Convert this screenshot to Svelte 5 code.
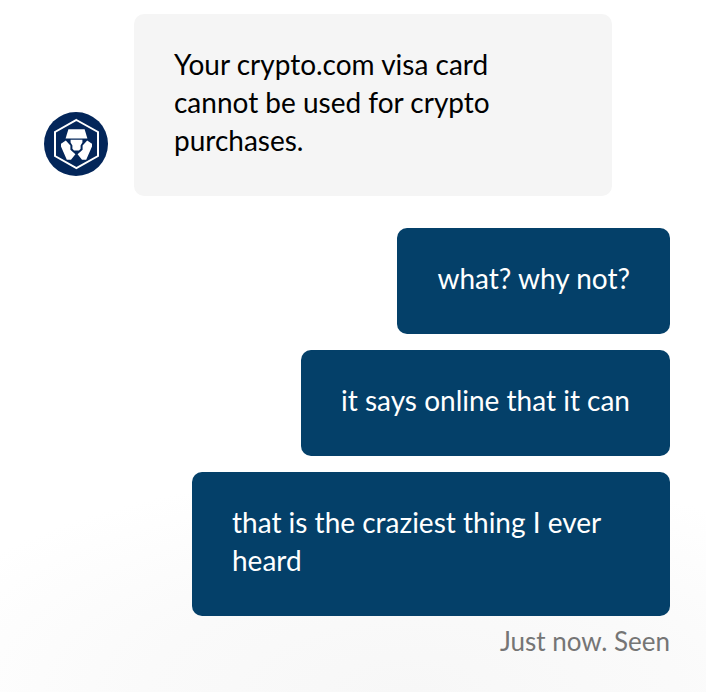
<script lang="ts">
  type Message = { id: number; text: string };

  const reply: Message = {
    id: 1,
    text: 'Your crypto.com visa card cannot be used for crypto purchases.',
  };

  const sent: Message[] = [
    { id: 2, text: 'what? why not?' },
    { id: 3, text: 'it says online that it can' },
    { id: 4, text: 'that is the craziest thing I ever heard' },
  ];

  const status = 'Just now. Seen';
</script>

<main class="conversation">
  <div class="incoming">
    <svg class="avatar" viewBox="0 0 64 64" role="img" aria-label="crypto.com">
      <circle cx="32" cy="32" r="32" fill="#03265a" />
      <path d="M32.4 8 54 20v24L32.4 56 11 44V20Z" fill="none" stroke="#fff" stroke-width="2" />
      <g fill="#fff">
        <path d="M24.4 17.2h16.2l2.8 9.2H21.6Z" />
        <path d="M26.6 27.8h11.8v2.8l-1.8 2.8v3.4l-1.6 1.6h-5l-1.6-1.6v-3.4l-1.8-2.8Z" />
        <path d="m21.8 28.4 4.6 5.2v4.2l5 4.4-4.4 5.6h-4.2L17 34.4v-2.6Z" />
        <path d="m43.2 28.4-4.6 5.2v4.2l-5 4.4 4.4 5.6h4.2L48 34.4v-2.6Z" />
      </g>
    </svg>
    <p class="bubble">{reply.text}</p>
  </div>

  <div class="outgoing">
    {#each sent as message (message.id)}
      <p class="bubble sent">{message.text}</p>
    {/each}
    <p class="status">{status}</p>
  </div>
</main>

<style>
  :global(body) {
    margin: 0;
  }
  .conversation {
    display: flex;
    flex-direction: column;
    gap: 32px;
    box-sizing: border-box;
    min-height: 100vh;
    padding: 14px 36px 24px 44px;
    background: radial-gradient(ellipse 75% 32% at 58% 100%, #f7f7f7, #fafafa 50%, #fff);
    font-family: Lato, 'Open Sans', sans-serif;
    font-size: 28px;
    line-height: 38px;
  }
  .incoming {
    display: flex;
    align-items: flex-end;
    gap: 26px;
  }
  .avatar {
    flex: none;
    width: 64px;
    height: 64px;
    margin-bottom: 20px;
  }
  .bubble {
    box-sizing: border-box;
    max-width: 478px;
    margin: 0;
    padding: 31px 40px 37px;
    border-radius: 10px;
    background: #f5f5f5;
    color: #000;
  }
  .outgoing {
    display: flex;
    flex-direction: column;
    align-items: flex-end;
    gap: 16px;
  }
  .sent {
    background: #044069;
    color: #fff;
  }
  .status {
    margin: -9px 0 0;
    color: #757575;
    font-size: 26px;
    line-height: 36px;
  }
</style>
